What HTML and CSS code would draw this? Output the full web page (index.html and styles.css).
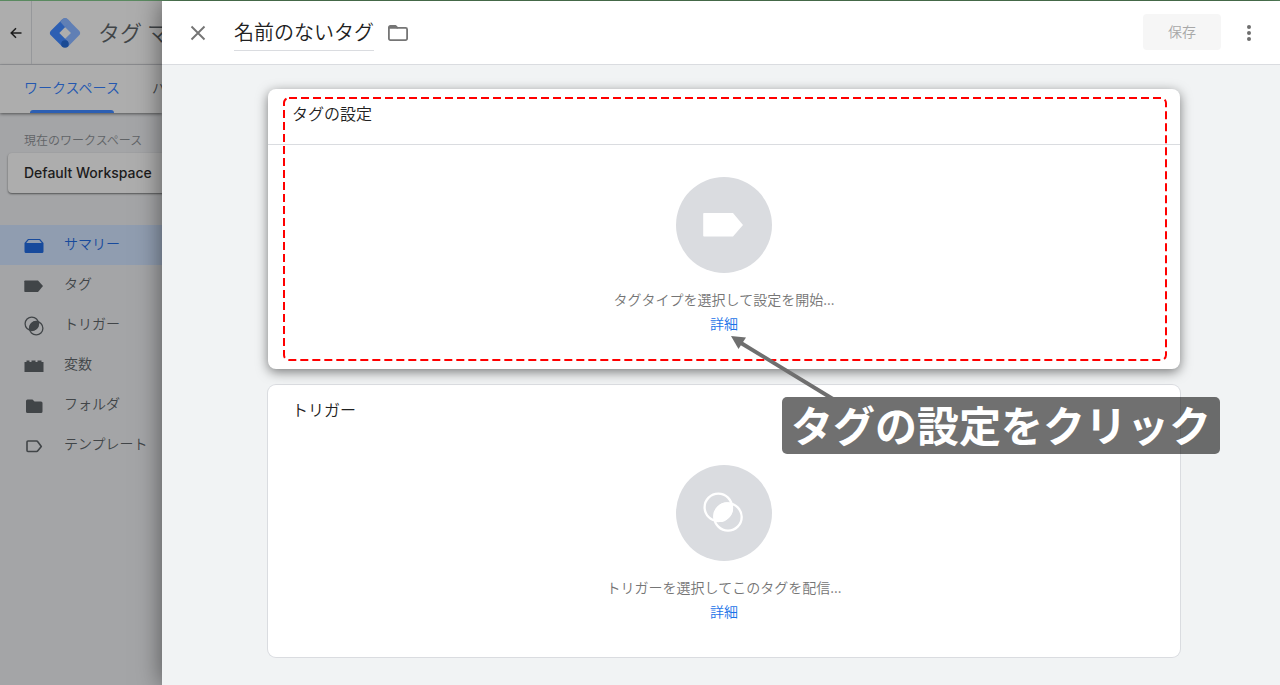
FILE: index.html
```html
<!DOCTYPE html>
<html lang="ja">
<head>
<meta charset="utf-8">
<title>タグ マネージャー</title>
<meta name="viewport" content="width=device-width, initial-scale=1">
<link rel="stylesheet" href="styles.css">
</head>
<body>
<div class="app">
  <aside class="side">
    <header class="side-header">
      <button class="back" type="button" aria-label="戻る">
        <svg width="12" height="12" viewBox="0 0 12 12" fill="none" stroke="#1c1c1c" stroke-width="1.500"><path d="M11.500 6H1.500M6 1.200 1.200 6 6 10.800"/></svg>
      </button>
      <svg class="logo" width="30" height="30" viewBox="0 0 30 30">
        <path d="M12.400 1.200a3.800 3.800 0 0 1 5.300 0L28.900 12.400a3.700 3.700 0 0 1 0 5.200L17.700 28.900 12.400 23.600 21 15 12.400 6.400z" fill="#607fb5"/>
        <path d="M12.400 1.200 17.700 6.500 9.300 15l8.500 8.400-5.400 5.400L1.100 17.600a3.700 3.700 0 0 1 0-5.200z" fill="#2d5fb3"/>
        <path d="M12.400 1.200a3.800 3.800 0 0 1 5.300 0L21 4.500 15 9.300 10 3.600z" fill="#607fb5"/>
        <circle cx="15" cy="26" r="3.800" fill="#1a4a94"/>
      </svg>
      <span class="product">タグ マネージャー</span>
    </header>
    <nav class="tabs">
      <a class="tab tab-active" href="#workspace">ワークスペース</a>
      <a class="tab" href="#versions">バージョン</a>
    </nav>
    <p class="caption">現在のワークスペース</p>
    <button class="workspace" type="button">Default Workspace</button>
    <nav class="menu">
      <a class="item item-active" href="#summary">
        <svg width="20" height="20" viewBox="0 0 20 20" fill="#174a9c"><path fill-rule="evenodd" d="M4 3h12l3.500 4v8.500a1.500 1.500 0 0 1-1.500 1.500H2a1.500 1.500 0 0 1-1.500-1.500V7zM4.700 4 2.200 7h15.600l-2.500-3z"/></svg>
        サマリー</a>
      <a class="item" href="#tags">
        <svg width="20" height="20" viewBox="0 0 20 20" fill="#414548"><path d="M1 4.500h13L19 10l-5 6H1a.7.700 0 0 1-.7-.7V5.200A.7.700 0 0 1 1 4.500z"/></svg>
        タグ</a>
      <a class="item" href="#triggers">
        <svg width="20" height="20" viewBox="0 0 20 20"><g fill="none" stroke="#414548" stroke-width="1.300"><circle cx="7.800" cy="7.800" r="6.700"/><circle cx="12.200" cy="12.200" r="6.700"/></g><path fill="#414548" d="M14.300 5.700A6.700 6.700 0 0 1 5.700 14.300 6.700 6.700 0 0 1 14.300 5.700z"/></svg>
        トリガー</a>
      <a class="item" href="#variables">
        <svg width="20" height="20" viewBox="0 0 20 20" fill="#414548"><path d="M.5 6h2V4.500h3V6h2V4.500h4V6h2V4.500h4V6h2v10H.5z"/></svg>
        変数</a>
      <a class="item" href="#folders">
        <svg width="20" height="20" viewBox="0 0 20 20" fill="#414548"><path d="M3.500 3.500h5l2 2h6.500A1.500 1.500 0 0 1 18.500 7v8.500A1.500 1.500 0 0 1 17 17H3.500A1.500 1.500 0 0 1 2 15.500V5a1.500 1.500 0 0 1 1.500-1.500z"/></svg>
        フォルダ</a>
      <a class="item" href="#templates">
        <svg width="20" height="20" viewBox="0 0 20 20" fill="none" stroke="#414548" stroke-width="1.600" stroke-linejoin="round"><path d="M4 5h8.500a1.500 1.500 0 0 1 1.300.7L17.300 10.500l-3.500 4.300a1.500 1.500 0 0 1-1.300.7H4A1 1 0 0 1 3 14.500V6a1 1 0 0 1 1-1z"/></svg>
        テンプレート</a>
    </nav>
  </aside>

  <section class="panel">
    <header class="panel-header">
      <button class="icon-button" type="button" aria-label="閉じる">
        <svg width="16" height="16" viewBox="0 0 16 16" stroke="#757575" stroke-width="1.900"><path d="M1.500 1.500l13 13M14.500 1.500l-13 13"/></svg>
      </button>
      <input class="name" type="text" value="名前のないタグ" aria-label="タグの名前">
      <button class="icon-button" type="button" aria-label="フォルダ">
        <svg width="20" height="16" viewBox="0 0 20 16" fill="none" stroke="#757575" stroke-width="1.800" stroke-linejoin="round"><path d="M2.400.9H7.500l2 2h8.100a1.500 1.500 0 0 1 1.500 1.500v9.200a1.500 1.500 0 0 1-1.500 1.500H2.400a1.500 1.500 0 0 1-1.500-1.500V2.400A1.500 1.500 0 0 1 2.400.9z"/><path fill="#757575" stroke="none" d="M1 1h6.500l2.500 2.800H1z"/></svg>
      </button>
      <button class="save" type="button" disabled>保存</button>
      <button class="icon-button more" type="button" aria-label="その他">
        <svg width="4" height="16" viewBox="0 0 4 16" fill="#6e6e6e"><circle cx="2" cy="2" r="2"/><circle cx="2" cy="8" r="2"/><circle cx="2" cy="14" r="2"/></svg>
      </button>
    </header>
    <main class="content">
      <section class="card card-raised">
        <h2 class="card-title card-title-ruled">タグの設定</h2>
        <div class="card-body">
          <span class="disc">
            <svg width="40" height="40" viewBox="0 0 40 40" fill="#fff"><path d="M0 8h29l10 12-10 11.500H0a.8.800 0 0 1-.8-.8V8.800A.8.800 0 0 1 0 8z"/></svg>
          </span>
          <p class="hint">タグタイプを選択して設定を開始...</p>
          <a class="more-link" href="#tag-help">詳細</a>
        </div>
        <svg class="outline" aria-hidden="true"><rect x="0" y="0" width="100%" height="100%" rx="5"/></svg>
        <svg class="arrow" width="104" height="61" viewBox="0 0 104 61" aria-hidden="true"><path d="M10 7 102 63" stroke="#6f6f6f" stroke-width="4"/><path d="M0 0 15 1.500 7.500 13z" fill="#6f6f6f"/></svg>
        <strong class="callout">タグの設定をクリック</strong>
      </section>
      <section class="card">
        <h2 class="card-title">トリガー</h2>
        <div class="card-body">
          <span class="disc">
            <svg width="40" height="40" viewBox="0 0 40 40"><g fill="none" stroke="#fff" stroke-width="2.300"><circle cx="14.300" cy="14.300" r="13.700"/><circle cx="24" cy="24" r="13.700"/></g><path fill="#fff" d="M28 10.300A13.700 13.700 0 0 1 10.300 28 13.700 13.700 0 0 1 28 10.300z"/></svg>
          </span>
          <p class="hint">トリガーを選択してこのタグを配信...</p>
          <a class="more-link" href="#trigger-help">詳細</a>
        </div>
      </section>
    </main>
  </section>
</div>
</body>
</html>
```
FILE: styles.css
```css
* { box-sizing: border-box; }
body {
  margin: 0;
  font-family: "Noto Sans CJK JP", sans-serif;
  font-weight: 350;
  font-size: 14px;
  line-height: 20px;
  color: #212121;
}
a { text-decoration: none; color: inherit; }
svg { display: block; flex: none; overflow: visible; }
button, input { font: inherit; color: inherit; border: 0; background: none; padding: 0; margin: 0; }
h2, p { margin: 0; font-weight: inherit; }

.app {
  display: grid;
  grid-template-columns: 162px minmax(0, 1fr);
  min-height: 100vh;
  border-top: 1px solid #5a8a60;
}

.side { overflow: hidden; background: #a4a5a7; color: #414548; white-space: nowrap; }
.side-header {
  display: flex;
  align-items: center;
  height: 64px;
  background: #adadad;
  border-bottom: 1px solid #96989b;
}
.back {
  display: flex;
  align-items: center;
  justify-content: center;
  align-self: stretch;
  width: 32px;
  flex: none;
  border-right: 1px solid #96989b;
}
.logo { margin: 0 18px; }
.product { padding-bottom: 4px; font-size: 22px; line-height: 32px; }
.tabs {
  display: flex;
  gap: 32px;
  height: 48px;
  padding-left: 24px;
  background: #adadad;
  box-shadow: 0 1px 3px rgba(0, 0, 0, .5);
}
.tab { position: relative; padding-top: 12px; }
.tab-active { color: #2458b0; }
.tab-active::after {
  content: "";
  position: absolute;
  left: 6px;
  right: 6px;
  bottom: 0;
  height: 3px;
  border-radius: 3px 3px 0 0;
  background: #2d5fb3;
}
.caption { padding: 17px 24px 3px; font-size: 12px; color: #606366; }
.workspace {
  display: block;
  width: 200px;
  height: 40px;
  margin-left: 8px;
  padding-left: 16px;
  border-radius: 4px;
  background: #adadad;
  box-shadow: 0 1px 2px rgba(0, 0, 0, .5);
  text-align: left;
  font-family: Inter, sans-serif;
  font-weight: 500;
  color: #1c1c1c;
}
.menu { padding-top: 32px; }
.item { display: flex; align-items: center; gap: 20px; height: 40px; padding: 0 24px 4px; }
.item svg { margin-top: 6px; }
.item-active { background: #909db0; color: #174a9c; }

.panel {
  position: relative;
  display: flex;
  flex-direction: column;
  background: #f1f3f4;
  box-shadow: 0 0 24px rgba(0, 0, 0, .5);
}
.panel-header {
  display: flex;
  align-items: center;
  height: 64px;
  padding: 0 21px 0 26px;
  background: #fff;
  border-bottom: 1px solid #dadce0;
}
.icon-button { display: flex; align-items: center; justify-content: center; min-width: 20px; height: 32px; }
.name {
  width: 140px;
  height: 36px;
  margin: 0 14px 0 26px;
  padding-bottom: 2px;
  border-bottom: 1px solid #dadce0;
  font-size: 20px;
}
.save {
  width: 78px;
  height: 36px;
  margin: 0 0 2px auto;
  padding-bottom: 2px;
  border-radius: 4px;
  background: #f6f6f6;
  color: #a8a8a8;
}
.more { margin-left: 18px; }

.content { display: flex; flex-direction: column; gap: 16px; padding: 24px 100px 27px 106px; }
.card { background: #fff; border-radius: 8px; box-shadow: 0 0 0 1px #dadce0; }
.card-raised { position: relative; z-index: 1; box-shadow: 0 3px 12px rgba(0, 0, 0, .5); }
.card-title { padding: 12px 24px 19px; font-size: 16px; line-height: 24px; }
.card-title-ruled { border-bottom: 1px solid #dadce0; }
.card-body { display: flex; flex-direction: column; align-items: center; padding: 32px 24px 36px; }
.card:last-child .card-body { padding-top: 25px; }
.disc {
  display: flex;
  align-items: center;
  justify-content: center;
  width: 96px;
  height: 96px;
  margin-bottom: 16px;
  border-radius: 50%;
  background: #dadce0;
}
.hint { margin-bottom: 4px; color: #757575; }
.more-link { color: #1a73e8; }

.outline {
  position: absolute;
  left: 16px;
  top: 9px;
  width: calc(100% - 30px);
  height: calc(100% - 18px);
  pointer-events: none;
}
.outline rect { fill: none; stroke: #ff0000; stroke-width: 2; stroke-dasharray: 8 4; }
.arrow { position: absolute; left: calc(50% + 7px); top: 247px; overflow: hidden; }
.callout {
  position: absolute;
  left: calc(50% + 58px);
  top: 308px;
  padding: 0 9px 4px;
  border-radius: 5px;
  background: rgba(0, 0, 0, .56);
  color: #fff;
  font-size: 42px;
  font-weight: 700;
  line-height: 53px;
  white-space: nowrap;
}
```
